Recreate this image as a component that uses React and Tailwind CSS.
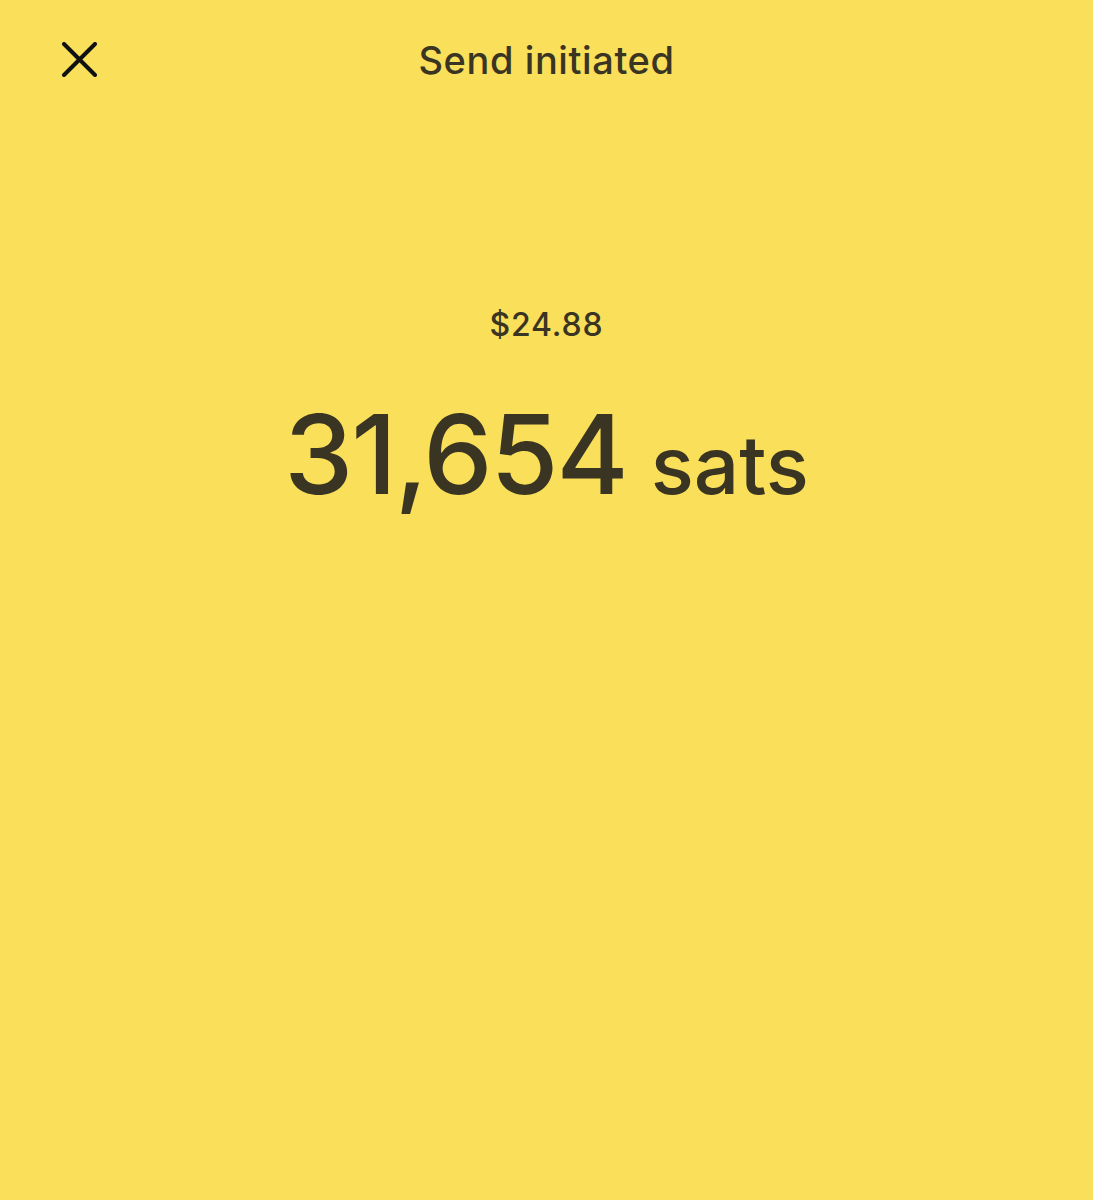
export default function App() {
  return (
    <div className="min-h-[1200px] w-full bg-[#f9df5a] text-[#3a3522]" style={{ fontFamily: 'Inter, "Liberation Sans", sans-serif' }}>
      <div className="relative flex h-[120px] items-center justify-center">
        <button className="absolute left-[62px] top-[42px] h-[35px] w-[35px]">
          <svg viewBox="0 0 35 35" className="h-[35px] w-[35px]" fill="none" stroke="#111" strokeWidth="4" strokeLinecap="round">
            <path d="M2 2L33 33M33 2L2 33" />
          </svg>
        </button>
        <h1 className="text-[38px] font-medium tracking-[0.6px]">Send initiated</h1>
      </div>
      <div className="flex flex-col items-center pt-[189px]">
        <div className="text-[32px] leading-none font-medium tracking-[0.8px]">$24.88</div>
        <div className="mt-[58px] flex items-baseline gap-[24px]">
          <span className="text-[110px] leading-none font-medium tracking-[-2px]">31,654</span>
          <span className="text-[80px] leading-none font-medium">sats</span>
        </div>
      </div>
    </div>
  )
}
